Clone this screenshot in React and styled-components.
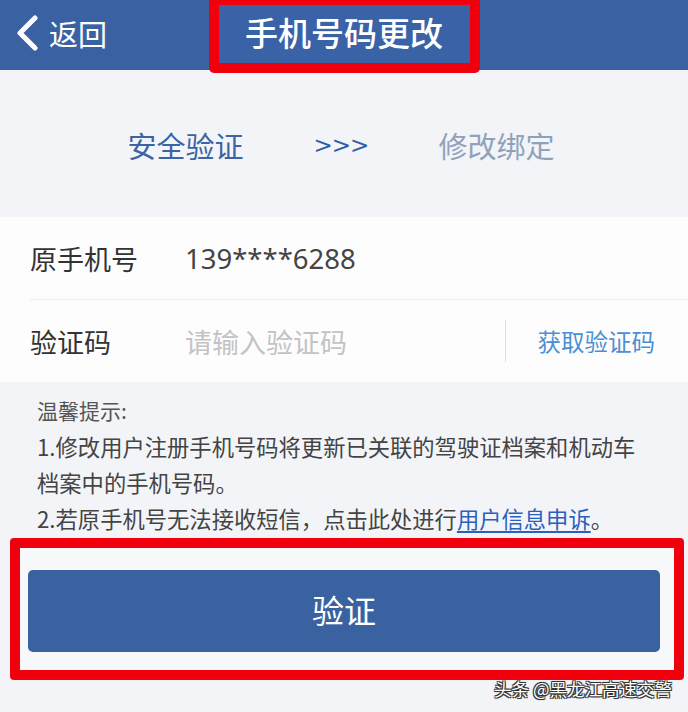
import React from "react";
import styled, { createGlobalStyle } from "styled-components";

const Global = createGlobalStyle`
  html, body { margin: 0; padding: 0; background: #f3f4f8; }
  body { font-family: "Noto Sans CJK SC", "Noto Sans", sans-serif; }
  * { box-sizing: border-box; }
`;

const Page = styled.div`
  position: relative;
  width: 688px;
  height: 712px;
  overflow: hidden;
  background: #f3f4f8;
  display: flex;
  flex-direction: column;
`;

const Header = styled.header`
  height: 70px;
  flex: none;
  background: #3a61a1;
  display: grid;
  grid-template-columns: 1fr auto 1fr;
  align-items: start;
  position: relative;
  z-index: 1;
`;

const Back = styled.div`
  display: flex;
  align-items: center;
  gap: 10px;
  height: 66px;
  padding-left: 15px;
  color: #fff;
  font-size: 29px;
`;

const TitleBox = styled.div`
  margin-top: -5px;
  width: 271px;
  height: 78px;
  border: 10px solid #f0000d;
  border-radius: 0 0 5px 5px;
  background: #3a63a7;
  display: flex;
  align-items: center;
  justify-content: center;
  color: #fff;
  font-size: 33px;
  font-weight: 500;
  padding-bottom: 4px;
`;

const Steps = styled.div`
  height: 147px;
  flex: none;
  display: flex;
  align-items: center;
  justify-content: center;
  gap: 70px;
  padding-top: 3px;
  padding-right: 6px;
`;

const Step = styled.span`
  font-size: 29px;
  color: ${(p) => (p.$active ? "#3a64a6" : "#8fa2bb")};
`;

const Arrows = styled.span`
  font-size: 23px;
  color: #2f5ea8;
  font-family: "DejaVu Sans", sans-serif;
  letter-spacing: -1px;
`;

const Card = styled.div`
  background: #fdfdfe;
  flex: none;
  display: flex;
  flex-direction: column;
`;

const Row = styled.div`
  height: ${(p) => p.$h}px;
  margin-left: 30px;
  display: flex;
  align-items: center;
  border-bottom: ${(p) => (p.$divider ? "1px solid #eceef2" : "none")};
`;

const Label = styled.span`
  width: 155px;
  flex: none;
  font-size: 27px;
  color: #333;
`;

const Value = styled.span`
  font-size: 27.5px;
  color: #444;
  font-family: "Noto Sans", "Noto Sans CJK SC", sans-serif;
`;

const Placeholder = styled.span`
  flex: 1;
  font-size: 27px;
  color: #c3c3c6;
`;

const Sep = styled.span`
  width: 1px;
  height: 42px;
  background: #dcdfe5;
  margin-right: 32px;
`;

const GetCode = styled.span`
  font-size: 23.5px;
  color: #4b8fd4;
  padding-right: 33px;
`;

const Tips = styled.div`
  padding: 10px 0 0 37px;
  height: 156px;
  flex: none;
  font-size: 22.3px;
  line-height: 36px;
  color: #444;
  white-space: nowrap;
`;

const TipTitle = styled.div`
  font-size: 21px;
  color: #555;
`;

const Link = styled.a`
  color: #2b5fc0;
  text-decoration: underline;
  text-underline-offset: 3px;
`;

const Highlight = styled.div`
  margin: 0 4px 0 10px;
  height: 142px;
  flex: none;
  border: 10px solid #f0000d;
  border-radius: 4px;
  background: #f7f8fa;
  padding: 22px 14px 18px 8px;
  display: flex;
`;

const Button = styled.button`
  flex: 1;
  border: none;
  border-radius: 5px;
  background: #3a62a1;
  color: #fff;
  font-family: inherit;
  font-size: 32px;
  padding: 0 0 4px;
  cursor: pointer;
`;

const Watermark = styled.div`
  position: absolute;
  right: 16px;
  top: 676px;
  font-size: 17.5px;
  color: #fff;
  text-shadow: -1px -1px 0 #333, 1px -1px 0 #333, -1px 1px 0 #333, 1px 1px 0 #333, 0 0 2px #000;
`;

export default function App() {
  return (
    <Page>
      <Global />
      <Header>
        <Back>
          <svg width="24" height="36" viewBox="0 0 24 36">
            <polyline
              points="20,3 5,18 20,33"
              fill="none"
              stroke="#fff"
              strokeWidth="5"
              strokeLinecap="round"
              strokeLinejoin="round"
            />
          </svg>
          返回
        </Back>
        <TitleBox>手机号码更改</TitleBox>
        <div />
      </Header>
      <Steps>
        <Step $active>安全验证</Step>
        <Arrows>&gt;&gt;&gt;</Arrows>
        <Step>修改绑定</Step>
      </Steps>
      <Card>
        <Row $h={83} $divider>
          <Label>原手机号</Label>
          <Value>139****6288</Value>
        </Row>
        <Row $h={82}>
          <Label>验证码</Label>
          <Placeholder>请输入验证码</Placeholder>
          <Sep />
          <GetCode>获取验证码</GetCode>
        </Row>
      </Card>
      <Tips>
        <TipTitle>温馨提示:</TipTitle>
        <div>
          1.修改用户注册手机号码将更新已关联的驾驶证档案和机动车
          <br />
          档案中的手机号码。
        </div>
        <div>
          2.若原手机号无法接收短信，点击此处进行<Link>用户信息申诉</Link>。
        </div>
      </Tips>
      <Highlight>
        <Button>验证</Button>
      </Highlight>
      <Watermark>头条 @黑龙江高速交警</Watermark>
    </Page>
  );
}
